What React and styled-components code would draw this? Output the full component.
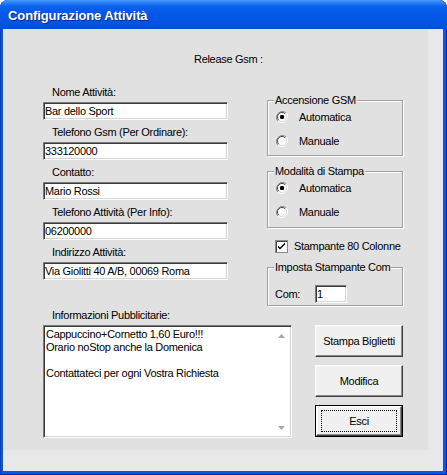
import React from 'react';
import styled, { createGlobalStyle } from 'styled-components';

const GlobalStyle = createGlobalStyle`
    html, body {
        margin: 0;
        padding: 0;
        background: #ffffff;
    }
    body {
        font-family: "Liberation Sans", Arial, sans-serif;
        font-size: 11px;
        letter-spacing: -0.3px;
        color: #000;
    }
`;

const Window = styled.div`
    width: 447px;
    height: 475px;
    display: flex;
    flex-direction: column;
    background: #0656e8;
    border-radius: 8px 8px 0 0;
    box-shadow: inset 1px 0 0 #0a3fb8, inset -1px 0 0 #00229a, inset 0 -1px 0 #00229a;
    overflow: hidden;
`;

const TitleBar = styled.div`
    height: 29px;
    flex: none;
    display: flex;
    align-items: center;
    padding: 2px 0 0 8px;
    box-sizing: border-box;
    background: linear-gradient(to bottom,
        #4a9cff 0%, #2a7ef8 10%, #0a62ec 22%, #0458e6 45%,
        #0356e4 70%, #0551e0 88%, #0349d6 100%);
    color: #fff;
    font-size: 13px;
    font-weight: bold;
    text-shadow: 1px 1px 0 #0b2a8c;
    letter-spacing: -0.1px;
`;

const Client = styled.div`
    flex: 1;
    margin: 0 4px 4px 3px;
    background: #e8e8e8;
    display: flex;
    align-items: flex-start;
`;

const Panel = styled.div`
    width: 425px;
    height: 421px;
    box-sizing: border-box;
    background: #e1e1e1;
    padding: 24px 0 0 40px;
    display: flex;
    flex-direction: column;
`;

const Text = styled.div`
    line-height: 13px;
    height: 13px;
    white-space: nowrap;
`;

const ReleaseRow = styled(Text)`
    padding-left: 151px;
`;

const UpperRow = styled.div`
    display: flex;
    align-items: flex-start;
    gap: 39px;
    margin-top: 20px;
`;

const FieldColumn = styled.div`
    width: 185px;
    display: flex;
    flex-direction: column;
    gap: 6px;
`;

const Field = styled.div`
    display: flex;
    flex-direction: column;
    gap: 3px;
`;

const FieldLabel = styled(Text)`
    padding-left: 9px;
`;

const TextBox = styled.input`
    width: ${p => p.$w || 185}px;
    height: 18px;
    box-sizing: border-box;
    margin: 0;
    padding: 0 1px;
    border: 1px solid;
    border-color: #7a7a7a #ffffff #ffffff #7a7a7a;
    box-shadow: inset 1px 1px 0 #3c3c3c, inset -1px -1px 0 #d6d6d6;
    background: #fff;
    font-family: inherit;
    font-size: 11px;
    letter-spacing: inherit;
    color: #000;
    outline: none;
`;

const SideColumn = styled.div`
    width: 137px;
    margin-top: 8px;
    display: flex;
    flex-direction: column;
`;

const GroupBox = styled.fieldset`
    margin: ${p => p.$mt || 0}px 0 0 0;
    padding: 0 0 0 6px;
    height: ${p => p.$h}px;
    width: 136px;
    box-sizing: border-box;
    min-inline-size: auto;
    border: 1px solid #a0a0a0;
    box-shadow: inset 1px 1px 0 #ffffff, 1px 1px 0 #ffffff;
    display: flex;
    flex-direction: column;

    legend {
        padding: 0 1px;
        line-height: 13px;
        background: #e1e1e1;
        white-space: nowrap;
    }
`;

const RadioRow = styled.label`
    display: flex;
    align-items: center;
    gap: 11px;
    height: 20px;
    padding-left: 2px;
    margin-top: ${p => p.$mt || 0}px;
    white-space: nowrap;
`;

const CheckRow = styled.label`
    display: flex;
    align-items: center;
    gap: 6px;
    height: 20px;
    padding-left: 8px;
    margin-top: 8px;
    white-space: nowrap;
`;

const ComRow = styled.div`
    display: flex;
    align-items: center;
    margin-top: 11px;
    padding-left: 1px;

    span {
        width: 40px;
    }
`;

const LowerRow = styled.div`
    display: flex;
    align-items: flex-start;
    gap: 23px;
    margin-top: 3px;
`;

const InfoBlock = styled.div`
    display: flex;
    flex-direction: column;
    gap: 3px;
`;

const Memo = styled.div`
    width: 249px;
    height: 113px;
    box-sizing: border-box;
    border: 1px solid;
    border-color: #7a7a7a #ffffff #ffffff #7a7a7a;
    box-shadow: inset 1px 1px 0 #3c3c3c, inset -1px -1px 0 #d6d6d6;
    background: #fff;
    display: flex;
    padding: 1px;
`;

const MemoText = styled.div`
    flex: 1;
    padding: 1px 0 0 1px;
    line-height: 13px;
    white-space: pre;
`;

const ScrollBar = styled.div`
    width: 17px;
    display: flex;
    flex-direction: column;
    justify-content: space-between;
`;

const ScrollArrow = styled.div`
    height: 17px;
    display: flex;
    align-items: center;
    justify-content: center;
`;

const ButtonColumn = styled.div`
    display: flex;
    flex-direction: column;
    gap: 8px;
    margin-top: 16px;
`;

const Button = styled.button`
    width: 88px;
    height: 32px;
    margin: 0;
    padding: 0;
    box-sizing: border-box;
    background: #f0f0f0;
    font-family: inherit;
    font-size: 11px;
    letter-spacing: inherit;
    color: #000;
    border: 1px solid;
    border-color: #ffffff #404040 #404040 #ffffff;
    box-shadow: inset -1px -1px 0 #8a8a8a, inset 1px 1px 0 #f7f7f7;
    display: flex;
    align-items: center;
    justify-content: center;
    outline: ${p => (p.$default ? '1px solid #000' : 'none')};
    outline-offset: 0;
    ${p => p.$default && `
        width: 86px;
        height: 30px;
        margin: 1px;
    `}

    span {
        display: flex;
        align-items: center;
        justify-content: center;
        width: ${p => (p.$default ? '74px' : 'auto')};
        height: ${p => (p.$default ? '20px' : 'auto')};
        border: ${p => (p.$default ? '1px dotted #000' : 'none')};
    }
`;

const Radio = ({ checked }) => (
    <svg width="12" height="12" viewBox="0 0 12 12">
        <path d="M10.2 1.8 A6 6 0 0 0 1.8 10.2" fill="none" stroke="#8a8a8a" strokeWidth="1" />
        <path d="M1.8 10.2 A6 6 0 0 0 10.2 1.8" fill="none" stroke="#ffffff" strokeWidth="1" />
        <circle cx="6" cy="6" r="4.6" fill="#ffffff" />
        <path d="M9.2 2.8 A4.5 4.5 0 0 0 2.8 9.2" fill="none" stroke="#404040" strokeWidth="1" />
        <path d="M2.8 9.2 A4.5 4.5 0 0 0 9.2 2.8" fill="none" stroke="#d6d6d6" strokeWidth="1" />
        {checked && <rect x="4" y="4" width="4" height="4" rx="1.2" fill="#000" />}
    </svg>
);

const Check = () => (
    <svg width="13" height="13" viewBox="0 0 13 13">
        <rect x="0.5" y="0.5" width="12" height="12" fill="#fff" stroke="#8a8a8a" />
        <path d="M1.5 12 V1.5 H12" fill="none" stroke="#404040" />
        <path d="M3 5.5 L5 7.5 L10 2.5 V4.5 L5 9.5 L3 7.5 Z" fill="#000" />
    </svg>
);

const Arrow = ({ down }) => (
    <svg width="7" height="4" viewBox="0 0 7 4">
        <path d={down ? 'M0 0 H7 L3.5 4 Z' : 'M0 4 H7 L3.5 0 Z'} fill="#a8a8a8" />
    </svg>
);

const fields = [
    { label: 'Nome Attività:', value: 'Bar dello Sport' },
    { label: 'Telefono Gsm (Per Ordinare):', value: '333120000' },
    { label: 'Contatto:', value: 'Mario Rossi' },
    { label: 'Telefono Attività (Per Info):', value: '06200000' },
    { label: 'Indirizzo Attività:', value: 'Via Giolitti 40 A/B, 00069 Roma' },
];

const memo = 'Cappuccino+Cornetto 1,60 Euro!!!\nOrario noStop anche la Domenica\n\nContattateci per ogni Vostra Richiesta';

const App = () => {
    return (
        <>
            <GlobalStyle />
            <Window>
                <TitleBar>Configurazione Attività</TitleBar>
                <Client>
                    <Panel>
                        <ReleaseRow>Release Gsm :</ReleaseRow>

                        <UpperRow>
                            <FieldColumn>
                                {fields.map(f => (
                                    <Field key={f.label}>
                                        <FieldLabel>{f.label}</FieldLabel>
                                        <TextBox readOnly defaultValue={f.value} />
                                    </Field>
                                ))}
                            </FieldColumn>

                            <SideColumn>
                                <GroupBox $h={62}>
                                    <legend>Accensione GSM</legend>
                                    <RadioRow><Radio checked />Automatica</RadioRow>
                                    <RadioRow $mt={4}><Radio />Manuale</RadioRow>
                                </GroupBox>

                                <GroupBox $h={63} $mt={9}>
                                    <legend>Modalità di Stampa</legend>
                                    <RadioRow><Radio checked />Automatica</RadioRow>
                                    <RadioRow $mt={4}><Radio />Manuale</RadioRow>
                                </GroupBox>

                                <CheckRow><Check />Stampante 80 Colonne</CheckRow>

                                <GroupBox $h={45} $mt={5}>
                                    <legend>Imposta Stampante Com</legend>
                                    <ComRow>
                                        <span>Com:</span>
                                        <TextBox $w={32} readOnly defaultValue="1" />
                                    </ComRow>
                                </GroupBox>
                            </SideColumn>
                        </UpperRow>

                        <LowerRow>
                            <InfoBlock>
                                <FieldLabel>Informazioni Pubblicitarie:</FieldLabel>
                                <Memo>
                                    <MemoText>{memo}</MemoText>
                                    <ScrollBar>
                                        <ScrollArrow><Arrow /></ScrollArrow>
                                        <ScrollArrow><Arrow down /></ScrollArrow>
                                    </ScrollBar>
                                </Memo>
                            </InfoBlock>

                            <ButtonColumn>
                                <Button><span>Stampa Biglietti</span></Button>
                                <Button><span>Modifica</span></Button>
                                <Button $default><span>Esci</span></Button>
                            </ButtonColumn>
                        </LowerRow>
                    </Panel>
                </Client>
            </Window>
        </>
    );
};

export default App;
